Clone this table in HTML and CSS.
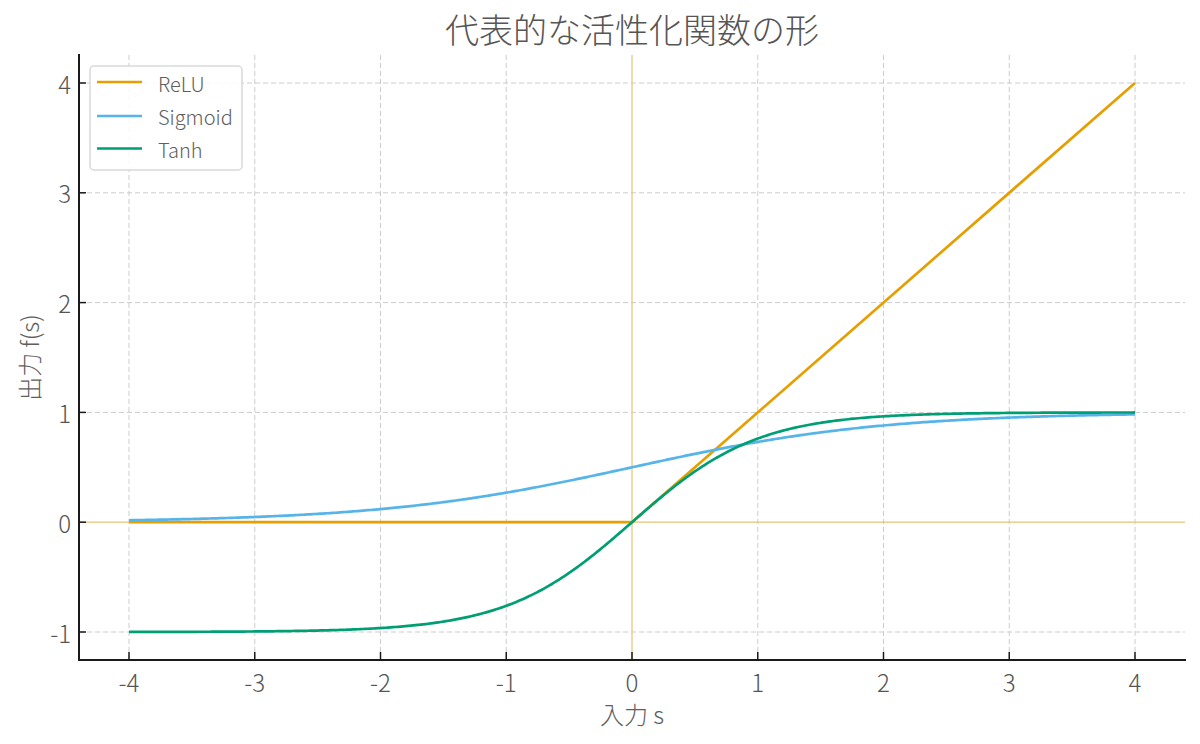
FILE: index.html
```html
<!DOCTYPE html>
<html lang="ja">
<head>
<meta charset="utf-8">
<title>代表的な活性化関数の形</title>
<link rel="stylesheet" href="styles.css">
</head>
<body>
<div class="figure">
  <h1 class="title">代表的な活性化関数の形</h1>
  <svg class="chart" width="1200" height="694" viewBox="0 50 1200 694">
    <g class="grid">
      <line x1="129" y1="55" x2="129" y2="660"/>
      <line x1="254.75" y1="55" x2="254.75" y2="660"/>
      <line x1="380.5" y1="55" x2="380.5" y2="660"/>
      <line x1="506.25" y1="55" x2="506.25" y2="660"/>
      <line x1="757.75" y1="55" x2="757.75" y2="660"/>
      <line x1="883.5" y1="55" x2="883.5" y2="660"/>
      <line x1="1009.25" y1="55" x2="1009.25" y2="660"/>
      <line x1="1135" y1="55" x2="1135" y2="660"/>
      <line x1="79" y1="83" x2="1185" y2="83"/>
      <line x1="79" y1="192.8" x2="1185" y2="192.8"/>
      <line x1="79" y1="302.6" x2="1185" y2="302.6"/>
      <line x1="79" y1="412.4" x2="1185" y2="412.4"/>
      <line x1="79" y1="632" x2="1185" y2="632"/>
    </g>
    <g class="zero-lines">
      <line x1="79" y1="522.2" x2="1185" y2="522.2"/>
      <line x1="632" y1="55" x2="632" y2="660"/>
    </g>
    <path class="curve relu" d="M129 522.2 L632 522.2 L1135 83"/>
    <path id="sigmoid" class="curve sigmoid" d=""/>
    <path id="tanh" class="curve tanh" d=""/>
    <g class="spines">
      <line x1="79" y1="54" x2="79" y2="661"/>
      <line x1="78" y1="660" x2="1186" y2="660"/>
    </g>
    <g class="ticks">
      <line x1="79" y1="83" x2="86" y2="83"/>
      <line x1="79" y1="192.8" x2="86" y2="192.8"/>
      <line x1="79" y1="302.6" x2="86" y2="302.6"/>
      <line x1="79" y1="412.4" x2="86" y2="412.4"/>
      <line x1="79" y1="522.2" x2="86" y2="522.2"/>
      <line x1="79" y1="632" x2="86" y2="632"/>
      <line x1="129" y1="660" x2="129" y2="652"/>
      <line x1="254.75" y1="660" x2="254.75" y2="652"/>
      <line x1="380.5" y1="660" x2="380.5" y2="652"/>
      <line x1="506.25" y1="660" x2="506.25" y2="652"/>
      <line x1="632" y1="660" x2="632" y2="652"/>
      <line x1="757.75" y1="660" x2="757.75" y2="652"/>
      <line x1="883.5" y1="660" x2="883.5" y2="652"/>
      <line x1="1009.25" y1="660" x2="1009.25" y2="652"/>
      <line x1="1135" y1="660" x2="1135" y2="652"/>
    </g>
    <g class="ytick-labels">
      <text x="71" y="83">4</text>
      <text x="71" y="192.8">3</text>
      <text x="71" y="302.6">2</text>
      <text x="71" y="412.4">1</text>
      <text x="71" y="522.2">0</text>
      <text x="71" y="632">-1</text>
    </g>
    <g class="xtick-labels">
      <text x="129" y="681">-4</text>
      <text x="254.75" y="681">-3</text>
      <text x="380.5" y="681">-2</text>
      <text x="506.25" y="681">-1</text>
      <text x="632" y="681">0</text>
      <text x="757.75" y="681">1</text>
      <text x="883.5" y="681">2</text>
      <text x="1009.25" y="681">3</text>
      <text x="1135" y="681">4</text>
    </g>
    <text class="axis-label" x="632" y="713">入力 s</text>
    <text class="axis-label" x="0" y="0" transform="translate(28 357.5) rotate(-90)">出力 f(s)</text>
    <g class="legend">
      <rect class="legend-box" x="90" y="66" width="152" height="104" rx="4"/>
      <line class="legend-line relu" x1="97" y1="82" x2="142" y2="82"/>
      <line class="legend-line sigmoid" x1="97" y1="116" x2="142" y2="116"/>
      <line class="legend-line tanh" x1="97" y1="148.5" x2="142" y2="148.5"/>
      <text class="legend-text" x="158" y="83">ReLU</text>
      <text class="legend-text" x="158" y="116">Sigmoid</text>
      <text class="legend-text" x="158" y="149">Tanh</text>
    </g>
  </svg>
</div>
<script src="script.js"></script>
</body>
</html>
```

FILE: styles.css
```css
html, body {
  margin: 0;
  padding: 0;
  background: #ffffff;
}

body {
  font-family: "Noto Sans CJK JP Light", "Noto Sans CJK JP DemiLight", "Noto Sans CJK JP", "Noto Sans", sans-serif;
  font-weight: 300;
  color: #4d4d4d;
}

.figure {
  width: 1200px;
  height: 744px;
  display: flex;
  flex-direction: column;
  overflow: hidden;
}

.title {
  box-sizing: border-box;
  margin: 0;
  height: 50px;
  padding: 8px 0 0 64px;
  line-height: 42px;
  font-size: 34px;
  font-weight: 300;
  text-align: center;
  color: #555555;
}

.chart {
  display: block;
  flex: none;
}

.grid line {
  stroke: #cccccc;
  stroke-width: 1;
  stroke-dasharray: 5 3;
}

.zero-lines line {
  stroke: #e9c274;
  stroke-width: 1.2;
}

.curve {
  fill: none;
  stroke-width: 2.7;
  stroke-linejoin: round;
}

.relu { stroke: #e69f00; }
.sigmoid { stroke: #56b4e9; }
.tanh { stroke: #009e73; }

.spines line {
  stroke: #1a1a1a;
  stroke-width: 2;
}

.ticks line {
  stroke: #1a1a1a;
  stroke-width: 1.5;
}

.ytick-labels text,
.xtick-labels text,
.axis-label,
.legend-text {
  font-family: "Noto Sans CJK JP Light", "Noto Sans CJK JP DemiLight", "Noto Sans CJK JP", "Noto Sans", sans-serif;
  font-weight: 300;
  fill: #555555;
  dominant-baseline: central;
}

.ytick-labels text {
  font-size: 24px;
  text-anchor: end;
}

.xtick-labels text {
  font-size: 24px;
  text-anchor: middle;
}

.axis-label {
  font-size: 24px;
  text-anchor: middle;
  fill: #5e5e5e;
}

.legend-box {
  fill: rgba(255, 255, 255, 0.85);
  stroke: #d9d9d9;
  stroke-width: 1.5;
}

.legend-line {
  stroke-width: 2.7;
}

.legend-text {
  font-size: 20px;
  fill: #5e5e5e;
}
```

FILE: script.js
```js
(function () {
  var X = function (x) { return 632 + x * 125.75; };
  var Y = function (y) { return 522.2 - y * 109.8; };
  function path(f) {
    var d = '';
    for (var i = 0; i <= 400; i++) {
      var x = -4 + i * 0.02;
      d += (i ? 'L' : 'M') + X(x).toFixed(2) + ' ' + Y(f(x)).toFixed(2);
    }
    return d;
  }
  document.getElementById('sigmoid').setAttribute('d', path(function (x) { return 1 / (1 + Math.exp(-x)); }));
  document.getElementById('tanh').setAttribute('d', path(function (x) { return Math.tanh(x); }));
})();
```
